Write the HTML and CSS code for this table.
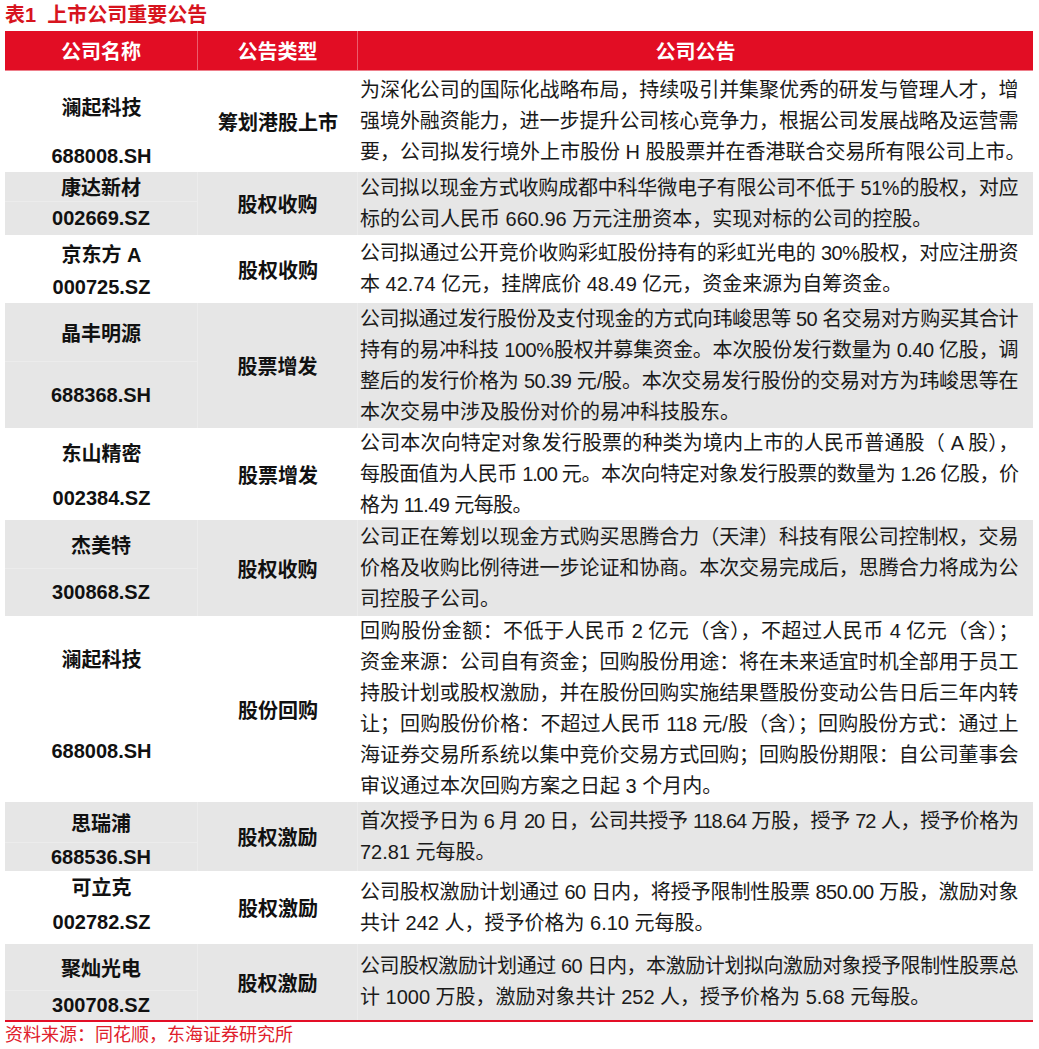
FILE: index.html
```html
<!DOCTYPE html>
<html lang="zh-CN">
<head>
<meta charset="utf-8">
<title>表1 上市公司重要公告</title>
<link rel="stylesheet" href="styles.css">
</head>
<body>
<div class="page">
  <div class="title">表1&nbsp; 上市公司重要公告</div>
  <div class="table">
    <div class="thead">
      <div class="h1">公司名称</div>
      <div class="h2">公告类型</div>
      <div class="h3">公司公告</div>
    </div>

    <div class="row r1">
      <div class="c1"><div class="nm">澜起科技</div><div class="cd">688008.SH</div></div>
      <div class="c2">筹划港股上市</div>
      <div class="c3">
        <div class="j">为深化公司的国际化战略布局，持续吸引并集聚优秀的研发与管理人才，增</div>
        <div class="j">强境外融资能力，进一步提升公司核心竞争力，根据公司发展战略及运营需</div>
        <div class="ln">要，公司拟发行境外上市股份 H 股股票并在香港联合交易所有限公司上市。</div>
      </div>
    </div>

    <div class="row r2 grey">
      <div class="c1"><div class="nm">康达新材</div><div class="cd">002669.SZ</div></div>
      <div class="c2">股权收购</div>
      <div class="c3">
        <div class="j">公司拟以现金方式收购成都中科华微电子有限公司不低于 51%的股权，对应</div>
        <div class="ln">标的公司人民币 660.96 万元注册资本，实现对标的公司的控股。</div>
      </div>
    </div>

    <div class="row r3">
      <div class="c1"><div class="nm">京东方 A</div><div class="cd">000725.SZ</div></div>
      <div class="c2">股权收购</div>
      <div class="c3">
        <div class="j">公司拟通过公开竞价收购彩虹股份持有的彩虹光电的 30%股权，对应注册资</div>
        <div class="ln">本 42.74 亿元，挂牌底价 48.49 亿元，资金来源为自筹资金。</div>
      </div>
    </div>

    <div class="row r4 grey">
      <div class="c1"><div class="nm">晶丰明源</div><div class="cd">688368.SH</div></div>
      <div class="c2">股票增发</div>
      <div class="c3">
        <div class="j">公司拟通过发行股份及支付现金的方式向玮峻思等 50 名交易对方购买其合计</div>
        <div class="j">持有的易冲科技 100%股权并募集资金。本次股份发行数量为 0.40 亿股，调</div>
        <div class="j">整后的发行价格为 50.39 元/股。本次交易发行股份的交易对方为玮峻思等在</div>
        <div class="ln">本次交易中涉及股份对价的易冲科技股东。</div>
      </div>
    </div>

    <div class="row r5">
      <div class="c1"><div class="nm">东山精密</div><div class="cd">002384.SZ</div></div>
      <div class="c2">股票增发</div>
      <div class="c3">
        <div class="j">公司本次向特定对象发行股票的种类为境内上市的人民币普通股（ A 股），</div>
        <div class="j jt">每股面值为人民币 1.00 元。本次向特定对象发行股票的数量为 1.26 亿股，价</div>
        <div class="ln lt">格为 11.49 元每股。</div>
      </div>
    </div>

    <div class="row r6 grey">
      <div class="c1"><div class="nm">杰美特</div><div class="cd">300868.SZ</div></div>
      <div class="c2">股权收购</div>
      <div class="c3">
        <div class="j">公司正在筹划以现金方式购买思腾合力（天津）科技有限公司控制权，交易</div>
        <div class="j">价格及收购比例待进一步论证和协商。本次交易完成后，思腾合力将成为公</div>
        <div class="ln">司控股子公司。</div>
      </div>
    </div>

    <div class="row r7">
      <div class="c1"><div class="nm">澜起科技</div><div class="cd">688008.SH</div></div>
      <div class="c2">股份回购</div>
      <div class="c3">
        <div class="j">回购股份金额：不低于人民币 2 亿元（含），不超过人民币 4 亿元（含）；</div>
        <div class="j">资金来源：公司自有资金；回购股份用途：将在未来适宜时机全部用于员工</div>
        <div class="j">持股计划或股权激励，并在股份回购实施结果暨股份变动公告日后三年内转</div>
        <div class="j">让；回购股份价格：不超过人民币 118 元/股（含）；回购股份方式：通过上</div>
        <div class="j">海证券交易所系统以集中竞价交易方式回购；回购股份期限：自公司董事会</div>
        <div class="ln">审议通过本次回购方案之日起 3 个月内。</div>
      </div>
    </div>

    <div class="row r8 grey">
      <div class="c1"><div class="nm">思瑞浦</div><div class="cd">688536.SH</div></div>
      <div class="c2">股权激励</div>
      <div class="c3">
        <div class="j jt">首次授予日为 6 月 20 日，公司共授予 118.64 万股，授予 72 人，授予价格为</div>
        <div class="ln">72.81 元每股。</div>
      </div>
    </div>

    <div class="row r9">
      <div class="c1"><div class="nm">可立克</div><div class="cd">002782.SZ</div></div>
      <div class="c2">股权激励</div>
      <div class="c3">
        <div class="j">公司股权激励计划通过 60 日内，将授予限制性股票 850.00 万股，激励对象</div>
        <div class="ln">共计 242 人，授予价格为 6.10 元每股。</div>
      </div>
    </div>

    <div class="row r10 grey">
      <div class="c1"><div class="nm">聚灿光电</div><div class="cd">300708.SZ</div></div>
      <div class="c2">股权激励</div>
      <div class="c3">
        <div class="j">公司股权激励计划通过 60 日内，本激励计划拟向激励对象授予限制性股票总</div>
        <div class="ln">计 1000 万股，激励对象共计 252 人，授予价格为 5.68 元每股。</div>
      </div>
    </div>
  </div>
  <div class="source">资料来源：同花顺，东海证券研究所</div>
</div>
</body>
</html>
```

FILE: styles.css
```css
html, body {
  margin: 0;
  padding: 0;
  background: #ffffff;
}

body {
  font-family: "Liberation Sans", "Noto Sans CJK SC", Arial, sans-serif;
  color: #1a1a1a;
}

.page {
  width: 1039px;
  padding-left: 5px;
  box-sizing: border-box;
}

.title {
  height: 31px;
  line-height: 30px;
  font-size: 20px;
  font-weight: bold;
  color: #d7141e;
  white-space: nowrap;
}

.table {
  width: 1028px;
  border-bottom: 2px solid #e30e26;
}

.thead,
.row {
  display: grid;
  grid-template-columns: 193px 160px 675px;
}

.thead {
  height: 39px;
  background: #e20d24;
  color: #ffffff;
  font-size: 20px;
  font-weight: bold;
  border-bottom: 1px solid #ee7f8b;
}

.thead > div {
  display: flex;
  align-items: center;
  justify-content: center;
}

.thead .h1,
.thead .h2 {
  border-right: 1px solid #ec5d6d;
}

.row {
  background: #ffffff;
}

.row.grey {
  background: #e6e6e6;
}

.c1 {
  display: flex;
  flex-direction: column;
  font-size: 20px;
  font-weight: bold;
  color: #111111;
}

.c1 .nm,
.c1 .cd {
  display: flex;
  align-items: center;
  justify-content: center;
  white-space: nowrap;
}

.c1 .cd {
  flex: 1;
}

.c2 {
  display: flex;
  align-items: center;
  justify-content: center;
  font-size: 20px;
  font-weight: bold;
  color: #111111;
  white-space: nowrap;
}

.grey .c1,
.grey .c2 {
  border-right: 1px solid #ececec;
}

.grey .c1 .nm {
  border-bottom: 1px solid #ececec;
}

.c3 {
  display: flex;
  flex-direction: column;
  justify-content: center;
  padding-left: 2px;
  font-size: 20px;
  line-height: 31px;
  color: #1a1a1a;
}

.c3 .j,
.c3 .ln {
  width: 658px;
}

.c3 .j {
  text-align: justify;
  text-align-last: justify;
  letter-spacing: -0.5px;
}

.c3 .jt {
  letter-spacing: -1.1px;
}

.c3 .ln {
  white-space: nowrap;
}

.c3 .lt {
  letter-spacing: -0.6px;
}

/* row heights and the split of the first column */
.r1 { height: 101px; }
.r1 .nm { height: 70px; }

.r2 { height: 63px; }
.r2 .nm { height: 29px; }

.r3 { height: 68px; }
.r3 .nm { height: 37px; }

.r4 { height: 125px; }
.r4 .nm { height: 58px; }

.r5 { height: 92px; }
.r5 .nm { height: 48px; }

.r6 { height: 96px; }
.r6 .nm { height: 48px; }

.r7 { height: 186px; }
.r7 .nm { height: 84px; }

.r8 { height: 69px; }
.r8 .nm { height: 40px; }

.r9 { height: 73px; }
.r9 .nm { height: 30px; }

.r10 { height: 76px; }
.r10 .nm { height: 46px; }

.source {
  height: 26px;
  line-height: 26px;
  font-size: 18px;
  color: #e0202b;
  white-space: nowrap;
}
```
